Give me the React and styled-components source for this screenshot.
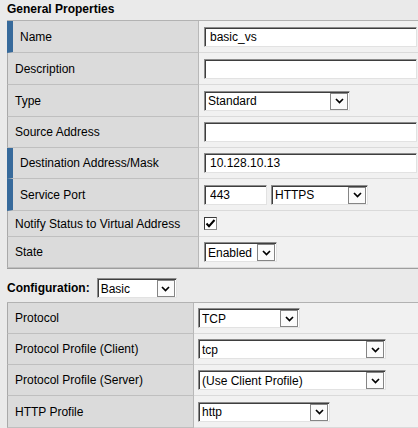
import styled, { createGlobalStyle } from "styled-components";

const GlobalStyle = createGlobalStyle`
  html, body {
    margin: 0;
    padding: 0;
    background: #eaeaea;
    overflow: hidden;
  }
  body {
    font-family: "Liberation Sans", Arial, sans-serif;
    font-size: 12px;
    color: #000;
  }
`;

const Page = styled.div`
  box-sizing: border-box;
  width: 418px;
  padding-left: 7px;
`;

const SectionTitle = styled.div`
  height: 20px;
  line-height: 18px;
  font-weight: bold;
`;

const Table = styled.div`
  border-top: 1px solid #b2b2b2;
  border-bottom: 1px solid #9e9e9e;
`;

const Row = styled.div`
  display: grid;
  grid-template-columns: ${(p) => p.$labelWidth}px 1fr;
  height: ${(p) => p.$h}px;
`;

const Label = styled.div`
  display: flex;
  align-items: center;
  background: #dbdbdb;
  border-left: ${(p) => (p.$required ? "6px solid #376a9b" : "1px solid #a9a9a9")};
  border-right: 1px solid #b8b8b8;
  border-bottom: 1px solid #bfbfbf;
  padding-left: 7px;
`;

const Value = styled.div`
  display: flex;
  align-items: center;
  gap: 4px;
  background: #f1f1f1;
  border-bottom: 1px solid #dadada;
  padding-left: ${(p) => p.$pad}px;
`;

const TextInput = styled.input`
  box-sizing: border-box;
  width: ${(p) => p.$w}px;
  height: 20px;
  margin: 0;
  padding: 0 0 0 5px;
  font-family: "Liberation Sans", Arial, sans-serif;
  font-size: 12px;
  color: #000;
  background: #fff;
  border: 1px solid;
  border-color: #8c8c8c #e2e2e2 #e2e2e2 #8c8c8c;
  box-shadow: inset 1px 1px 0 #3e3e3e;
  outline: none;
`;

const SelectBox = styled.div`
  box-sizing: border-box;
  width: ${(p) => p.$w}px;
  height: 20px;
  display: flex;
  align-items: center;
  padding: 1px 1px 0 3px;
  font-weight: normal;
  background: #fff;
  border: 1px solid;
  border-color: #8c8c8c #e2e2e2 #e2e2e2 #8c8c8c;
  box-shadow: inset 1px 1px 0 #3e3e3e;
`;

const SelectText = styled.span`
  flex: 1;
  white-space: nowrap;
  overflow: hidden;
`;

const ArrowButton = styled.span`
  box-sizing: border-box;
  width: 18px;
  height: 17px;
  display: flex;
  align-items: center;
  justify-content: center;
  background: #fbfbfb;
  border: 1px solid #858585;
`;

const CheckBox = styled.span`
  box-sizing: border-box;
  width: 13px;
  height: 13px;
  display: flex;
  align-items: center;
  justify-content: center;
  background: #fff;
  border: 1px solid;
  border-color: #3a3a3a #8a8a8a #8a8a8a #3a3a3a;
`;

const ConfigBar = styled.div`
  box-sizing: border-box;
  height: 33px;
  padding-top: 5px;
  display: flex;
  align-items: center;
  gap: 7px;
  font-weight: bold;
`;

const Select = ({ width, value }) => (
  <SelectBox $w={width}>
    <SelectText>{value}</SelectText>
    <ArrowButton>
      <svg width="9" height="6" viewBox="0 0 9 6">
        <polyline points="1,1 4.5,4.5 8,1" fill="none" stroke="#000" strokeWidth="1.7" />
      </svg>
    </ArrowButton>
  </SelectBox>
);

const general = [
  { label: "Name", h: 32, required: true, field: <TextInput $w={213} readOnly value="basic_vs" /> },
  { label: "Description", h: 32, field: <TextInput $w={213} readOnly value="" /> },
  { label: "Type", h: 32, field: <Select width={146} value="Standard" /> },
  { label: "Source Address", h: 31, field: <TextInput $w={213} readOnly value="" /> },
  { label: "Destination Address/Mask", h: 31, required: true, field: <TextInput $w={213} readOnly value="10.128.10.13" /> },
  {
    label: "Service Port",
    h: 32,
    required: true,
    field: (
      <>
        <TextInput $w={63} readOnly value="443" />
        <Select width={97} value="HTTPS" />
      </>
    ),
  },
  {
    label: "Notify Status to Virtual Address",
    h: 26,
    field: (
      <CheckBox>
        <svg width="11" height="11" viewBox="0 0 11 11">
          <polyline points="1.5,5.5 4,8.2 9.5,2" fill="none" stroke="#000" strokeWidth="2" />
        </svg>
      </CheckBox>
    ),
  },
  { label: "State", h: 31, field: <Select width={73} value="Enabled" /> },
];

const config = [
  { label: "Protocol", h: 31, field: <Select width={102} value="TCP" /> },
  { label: "Protocol Profile (Client)", h: 31, field: <Select width={188} value="tcp" /> },
  { label: "Protocol Profile (Server)", h: 31, field: <Select width={188} value="(Use Client Profile)" /> },
  { label: "HTTP Profile", h: 32, field: <Select width={132} value="http" /> },
];

const App = () => {
  return (
    <>
      <GlobalStyle />
      <Page>
        <SectionTitle>General Properties</SectionTitle>
        <Table>
          {general.map((r) => (
            <Row key={r.label} $labelWidth={192} $h={r.h}>
              <Label $required={r.required}>{r.label}</Label>
              <Value $pad={5}>{r.field}</Value>
            </Row>
          ))}
        </Table>
        <ConfigBar>
          Configuration:
          <Select width={80} value="Basic" />
        </ConfigBar>
        <Table>
          {config.map((r) => (
            <Row key={r.label} $labelWidth={187} $h={r.h}>
              <Label>{r.label}</Label>
              <Value $pad={4}>{r.field}</Value>
            </Row>
          ))}
        </Table>
      </Page>
    </>
  );
};

export default App;
